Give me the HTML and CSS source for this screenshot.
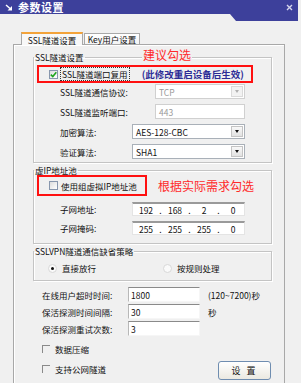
FILE: index.html
```html
<!DOCTYPE html>
<html lang="zh-CN">

<head>
    <meta charset="UTF-8">
    <meta name="viewport" content="width=device-width, initial-scale=1.0">
    <title>参数设置</title>
    <link rel="stylesheet" href="styles.css">
</head>

<body>
    <div class="dialog">
        <div class="titlebar">
            <svg class="title-icon" width="8" height="7" viewBox="0 0 8 7">
                <path d="M1 1 L5 4.5" stroke="#fff" stroke-width="1.4" fill="none" />
                <path d="M7 6.5 L2.5 6.5 L7 2 Z" fill="#fff" />
            </svg>
            <span class="title">参数设置</span>
            <svg class="close" width="7" height="7" viewBox="0 0 7 7">
                <path d="M1 1 L6 6 M6 1 L1 6" stroke="#d6d6ec" stroke-width="1.4" />
            </svg>
        </div>

        <div class="tabs">
            <div class="tab active">SSL隧道设置</div>
            <div class="tab">Key用户设置</div>
        </div>

        <div class="panel">
            <!-- SSL隧道设置 -->
            <fieldset class="group">
                <legend>SSL隧道设置<span class="hint hint-top">建议勾选</span></legend>
                <div class="mark mark-ssl">
                    <span class="check checked">
                        <svg width="7" height="7" viewBox="0 0 7 7">
                            <path d="M0.8 3.6 L2.8 5.6 L6.3 1.2" stroke="#1fa51f" stroke-width="1.6" fill="none" />
                        </svg>
                    </span>
                    <span class="focus">SSL隧道端口复用</span>
                    <span class="note">(此修改重启设备后生效)</span>
                </div>
                <div class="row row-first">
                    <span class="label">SSL隧道通信协议:</span>
                    <div class="select short disabled">TCP<span class="arrow"></span></div>
                </div>
                <div class="row">
                    <span class="label">SSL隧道监听端口:</span>
                    <div class="input short disabled">443</div>
                </div>
                <div class="row">
                    <span class="label">加密算法:</span>
                    <div class="select">AES-128-CBC<span class="arrow"></span></div>
                </div>
                <div class="row">
                    <span class="label">验证算法:</span>
                    <div class="select">SHA1<span class="arrow"></span></div>
                </div>
            </fieldset>

            <!-- 虚IP地址池 -->
            <fieldset class="group group-ip">
                <legend>虚IP地址池</legend>
                <div class="mark-line">
                    <div class="mark mark-ip">
                        <span class="check"></span>
                        <span class="mark-text">使用组虚拟IP地址池</span>
                    </div>
                    <span class="hint">根据实际需求勾选</span>
                </div>
                <div class="row row-ip">
                    <span class="label">子网地址:</span>
                    <div class="ipbox"><span>192</span><i>.</i><span>168</span><i>.</i><span>2</span><i>.</i><span>0</span></div>
                </div>
                <div class="row row-ip">
                    <span class="label">子网掩码:</span>
                    <div class="ipbox"><span>255</span><i>.</i><span>255</span><i>.</i><span>255</span><i>.</i><span>0</span></div>
                </div>
            </fieldset>

            <!-- 缺省策略 -->
            <fieldset class="group group-policy">
                <legend>SSLVPN隧道通信缺省策略</legend>
                <div class="radios">
                    <label class="radio radio-first"><span class="dot on"></span>直接放行</label>
                    <label class="radio"><span class="dot"></span>按规则处理</label>
                </div>
            </fieldset>

            <div class="field field-first">
                <span class="field-label">在线用户超时时间:</span>
                <div class="text-input">1800</div>
                <span class="suffix">(120~7200)秒</span>
            </div>
            <div class="field">
                <span class="field-label">保活探测时间间隔:</span>
                <div class="text-input">30</div>
                <span class="suffix">秒</span>
            </div>
            <div class="field">
                <span class="field-label">保活探测重试次数:</span>
                <div class="text-input">3</div>
            </div>

            <div class="footer">
                <div class="options">
                    <label class="option"><span class="box"></span>数据压缩</label>
                    <label class="option"><span class="box"></span>支持公网隧道</label>
                </div>
                <button class="btn">设 置</button>
            </div>
        </div>
    </div>
</body>

</html>
```

FILE: styles.css
```css
* {
    box-sizing: border-box;
}

body {
    margin: 0;
    padding: 0;
    background-color: #fff;
    font-family: "Noto Sans CJK SC", "Liberation Sans", sans-serif;
    font-size: 8.5px;
    color: #111;
}

.dialog {
    width: 301px;
    height: 383px;
    background-color: #f0f0f0;
    overflow: hidden;
}

/* 標題列 */
.titlebar {
    width: 298px;
    height: 21px;
    padding-bottom: 7px;
    display: flex;
    align-items: center;
    background-color: #3d409b;
    clip-path: polygon(0 0, 100% 0, 100% 21px, 236px 21px, 230px 14px, 0 14px);
}

.title-icon {
    margin-left: 5px;
}

.title {
    margin-left: 5px;
    color: #fff;
    font-size: 11px;
    font-weight: 700;
    letter-spacing: 0.5px;
    line-height: 12px;
}

.close {
    margin-left: auto;
    margin-right: 5px;
}

/* 頁籤 */
.tabs {
    display: flex;
    align-items: flex-end;
    height: 12px;
    margin: 11px 0 0 21px;
    position: relative;
    z-index: 1;
}

.tab {
    width: 56px;
    height: 11px;
    margin-left: 1px;
    display: flex;
    align-items: center;
    justify-content: center;
    border: 1px solid #a8a8a8;
    border-bottom: none;
    background: linear-gradient(#ffffff, #f4f4f4);
    line-height: 10px;
}

.tab.active {
    width: 62px;
    height: 13px;
    margin-left: 0;
    margin-bottom: -1px;
    border-top: 2px solid #f3a33a;
    background: #f8f8f8;
}

.panel {
    margin-left: 13px;
    width: 272px;
    height: 339px;
    padding: 0 12px 0 19px;
    border: 1px solid #a8a8a8;
    border-bottom: none;
    box-shadow: inset 1px 1px 0 #fff;
}

/* 群組框 */
.group {
    margin: 7px 0 0;
    padding: 0 0 3px;
    border: 1px solid #c4c4c4;
    box-shadow: inset 1px 1px 0 #fff, 1px 1px 0 #fff;
}

.group legend {
    position: relative;
    padding: 0 1px;
    line-height: 10px;
}

.group-ip {
    margin-top: 2px;
    padding-bottom: 8px;
}

.group-policy {
    margin-top: 2px;
    padding-bottom: 6px;
}

.hint {
    color: #ff2a2a;
    font-size: 12px;
    line-height: 12px;
    white-space: nowrap;
}

.hint-top {
    position: absolute;
    top: -3px;
    left: 108px;
    padding: 0 1px;
    background-color: #f0f0f0;
}

/* 紅框標示 */
.mark {
    display: flex;
    align-items: center;
    border: 2px solid #ff1010;
    padding-left: 10px;
}

.mark-ssl {
    width: 216px;
    height: 18px;
    margin: 3px 0 0 3px;
}

.mark-line {
    display: flex;
    align-items: center;
    margin-left: 3px;
}

.mark-ip {
    width: 110px;
    height: 21px;
    margin-right: 11px;
}

.check {
    width: 9px;
    height: 9px;
    flex: none;
    display: flex;
    align-items: center;
    justify-content: center;
    border: 1px solid #8796ad;
    background: linear-gradient(135deg, #dcdcdc, #fff);
}

.focus {
    margin-left: 2px;
    padding: 0 1px;
    border: 1px dotted #333;
    line-height: 12px;
}

.mark-text {
    margin-left: 3px;
}

.note {
    margin-left: 12px;
    color: #2c2c96;
    font-size: 9.5px;
    font-weight: 700;
    white-space: nowrap;
}

/* 表單列 */
.row {
    display: flex;
    align-items: center;
    height: 15px;
    margin-top: 5px;
    padding: 0 26px;
}

.row-first {
    margin-top: 1px;
}

.row-ip {
    height: 14px;
    margin-top: 6px;
}

.row-ip + .row-ip {
    margin-top: 5px;
}

.select,
.input {
    margin-left: auto;
    width: 113px;
    height: 15px;
    display: flex;
    align-items: center;
    padding-left: 3px;
    border: 1px solid #a9b0b8;
    background-color: #fff;
    font-size: 8.5px;
}

.short {
    width: 90px;
}

.disabled {
    color: #9a9a9a;
    border-color: #d0d0d0;
}

.arrow {
    margin: 0 1px 0 auto;
    width: 12px;
    height: 11px;
    border: 1px solid #c4c4c4;
    background: linear-gradient(#f8f8f8, #e2e2e2);
    position: relative;
}

.arrow::after {
    content: "";
    position: absolute;
    left: 3px;
    top: 3px;
    border-left: 2.5px solid transparent;
    border-right: 2.5px solid transparent;
    border-top: 3px solid #111;
}

.disabled .arrow {
    border-color: #dadada;
    background: #f2f2f2;
}

.disabled .arrow::after {
    border-top-color: #b0b0b0;
}

.ipbox {
    margin-left: auto;
    width: 113px;
    height: 14px;
    display: grid;
    grid-template-columns: 22px 7px 22px 7px 22px 7px 22px;
    align-items: center;
    padding-left: 2px;
    border: 1px solid #e4e4e4;
    border-top: 2px solid #9a9a9a;
    background-color: #fff;
    font-size: 8.5px;
    text-align: center;
}

.ipbox i {
    font-style: normal;
}

/* 單選 */
.radios {
    display: flex;
    align-items: center;
    height: 12px;
    margin-top: 6px;
    padding-left: 14px;
}

.radio {
    display: flex;
    align-items: center;
}

.radio-first {
    width: 115px;
}

.dot {
    width: 9px;
    height: 9px;
    margin-right: 5px;
    border: 1px solid #d8d8d8;
    border-radius: 50%;
    background-color: #fafafa;
    position: relative;
}

.dot.on::after {
    content: "";
    position: absolute;
    left: 2px;
    top: 2px;
    width: 3px;
    height: 3px;
    border-radius: 50%;
    background-color: #111;
}

/* 下方欄位 */
.field {
    display: flex;
    align-items: center;
    height: 15px;
    margin-top: 2px;
    padding-left: 9px;
}

.field-first {
    margin-top: 6px;
}

.field-label {
    width: 86px;
}

.text-input {
    width: 72px;
    height: 15px;
    padding-left: 2px;
    display: flex;
    align-items: center;
    border: 1px solid #f6f6f6;
    border-top: 1px solid #8a8a8a;
    border-left: 1px solid #b8b8b8;
    background-color: #fff;
    font-size: 8.5px;
}

.suffix {
    margin-left: 8px;
}

.footer {
    display: flex;
    justify-content: space-between;
    height: 45px;
    padding: 7px 0 1px 9px;
}

.options {
    display: flex;
    flex-direction: column;
    gap: 8px;
}

.option {
    display: flex;
    align-items: center;
    height: 12px;
}

.box {
    width: 8px;
    height: 8px;
    margin-right: 5px;
    border-top: 1px solid #8a8a8a;
    border-left: 1px solid #8a8a8a;
}

.btn {
    align-self: flex-end;
    width: 53px;
    height: 19px;
    margin-right: 1px;
    padding: 0;
    border: 1px solid #6f8db0;
    border-radius: 3px;
    background: linear-gradient(#ffffff, #ebe9e1);
    font-family: inherit;
    font-size: 9px;
    letter-spacing: 2px;
    color: #111;
}
```
